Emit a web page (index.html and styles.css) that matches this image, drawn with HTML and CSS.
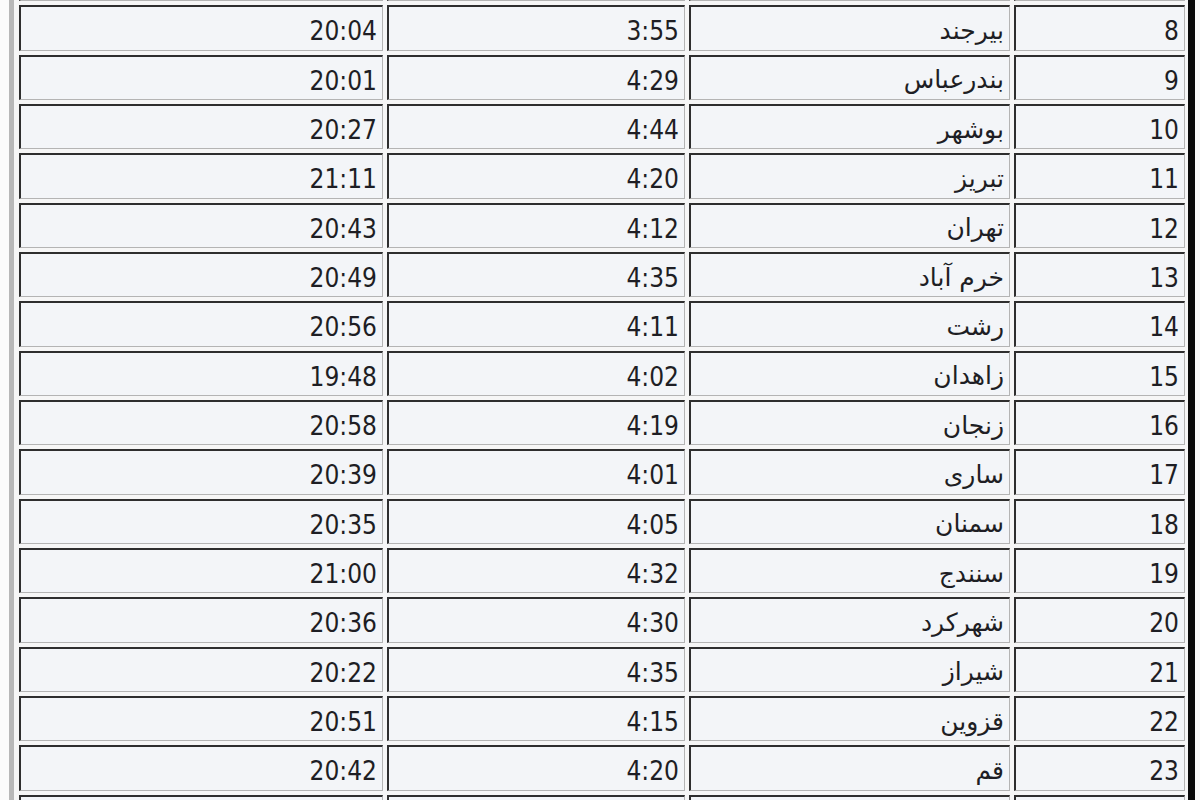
FILE: index.html
```html
<!DOCTYPE html>
<html lang="fa">
<head>
<meta charset="utf-8">
<title>جدول طلوع و غروب</title>
<link rel="stylesheet" href="styles.css">
</head>
<body>
<div class="viewport">
  <div class="table" dir="rtl">
    <div class="cell num"></div><div class="cell city"></div><div class="cell time"></div><div class="cell time"></div>
    <div class="cell num">8</div><div class="cell city">بیرجند</div><div class="cell time">3:55</div><div class="cell time">20:04</div>
    <div class="cell num">9</div><div class="cell city">بندرعباس</div><div class="cell time">4:29</div><div class="cell time">20:01</div>
    <div class="cell num">10</div><div class="cell city">بوشهر</div><div class="cell time">4:44</div><div class="cell time">20:27</div>
    <div class="cell num">11</div><div class="cell city">تبریز</div><div class="cell time">4:20</div><div class="cell time">21:11</div>
    <div class="cell num">12</div><div class="cell city">تهران</div><div class="cell time">4:12</div><div class="cell time">20:43</div>
    <div class="cell num">13</div><div class="cell city">خرم آباد</div><div class="cell time">4:35</div><div class="cell time">20:49</div>
    <div class="cell num">14</div><div class="cell city">رشت</div><div class="cell time">4:11</div><div class="cell time">20:56</div>
    <div class="cell num">15</div><div class="cell city">زاهدان</div><div class="cell time">4:02</div><div class="cell time">19:48</div>
    <div class="cell num">16</div><div class="cell city">زنجان</div><div class="cell time">4:19</div><div class="cell time">20:58</div>
    <div class="cell num">17</div><div class="cell city">ساری</div><div class="cell time">4:01</div><div class="cell time">20:39</div>
    <div class="cell num">18</div><div class="cell city">سمنان</div><div class="cell time">4:05</div><div class="cell time">20:35</div>
    <div class="cell num">19</div><div class="cell city">سنندج</div><div class="cell time">4:32</div><div class="cell time">21:00</div>
    <div class="cell num">20</div><div class="cell city">شهرکرد</div><div class="cell time">4:30</div><div class="cell time">20:36</div>
    <div class="cell num">21</div><div class="cell city">شیراز</div><div class="cell time">4:35</div><div class="cell time">20:22</div>
    <div class="cell num">22</div><div class="cell city">قزوین</div><div class="cell time">4:15</div><div class="cell time">20:51</div>
    <div class="cell num">23</div><div class="cell city">قم</div><div class="cell time">4:20</div><div class="cell time">20:42</div>
    <div class="cell num"></div><div class="cell city"></div><div class="cell time"></div><div class="cell time"></div>
  </div>
</div>
</body>
</html>
```

FILE: styles.css
```css
html, body {
  margin: 0;
  padding: 0;
  background: #ffffff;
}

.viewport {
  width: 1200px;
  height: 800px;
  overflow: hidden;
  background: #fbfbfb;
}

.table {
  margin: -53px 0 0 9px;
  width: 1186px;
  box-sizing: border-box;
  display: grid;
  grid-template-columns: 171px 321px 298px 1fr;
  grid-auto-rows: 45.33px;
  gap: 4px;
  padding: 4px 3px 4px 5px;
  background: #f6f6f6;
  border-style: solid;
  border-width: 5px 7px 5px 5px;
  border-color: #b8b8b8 #0a0a0a #0a0a0a #b8b8b8;
  font-family: "DejaVu Sans", "Noto Sans", sans-serif;
  color: #1e1e24;
}

.cell {
  box-sizing: border-box;
  display: flex;
  align-items: center;
  justify-content: flex-start;
  padding: 6px 5px 0 5px;
  background: #f3f5f8;
  border-style: solid;
  border-width: 2px 1px 1px 2px;
  border-color: #2e2e2e #b4b4b4 #b4b4b4 #2e2e2e;
  white-space: nowrap;
  overflow: hidden;
}

.num,
.time {
  font-size: 26px;
  font-stretch: condensed;
}

.city {
  font-size: 25px;
  padding-top: 4px;
}
```
